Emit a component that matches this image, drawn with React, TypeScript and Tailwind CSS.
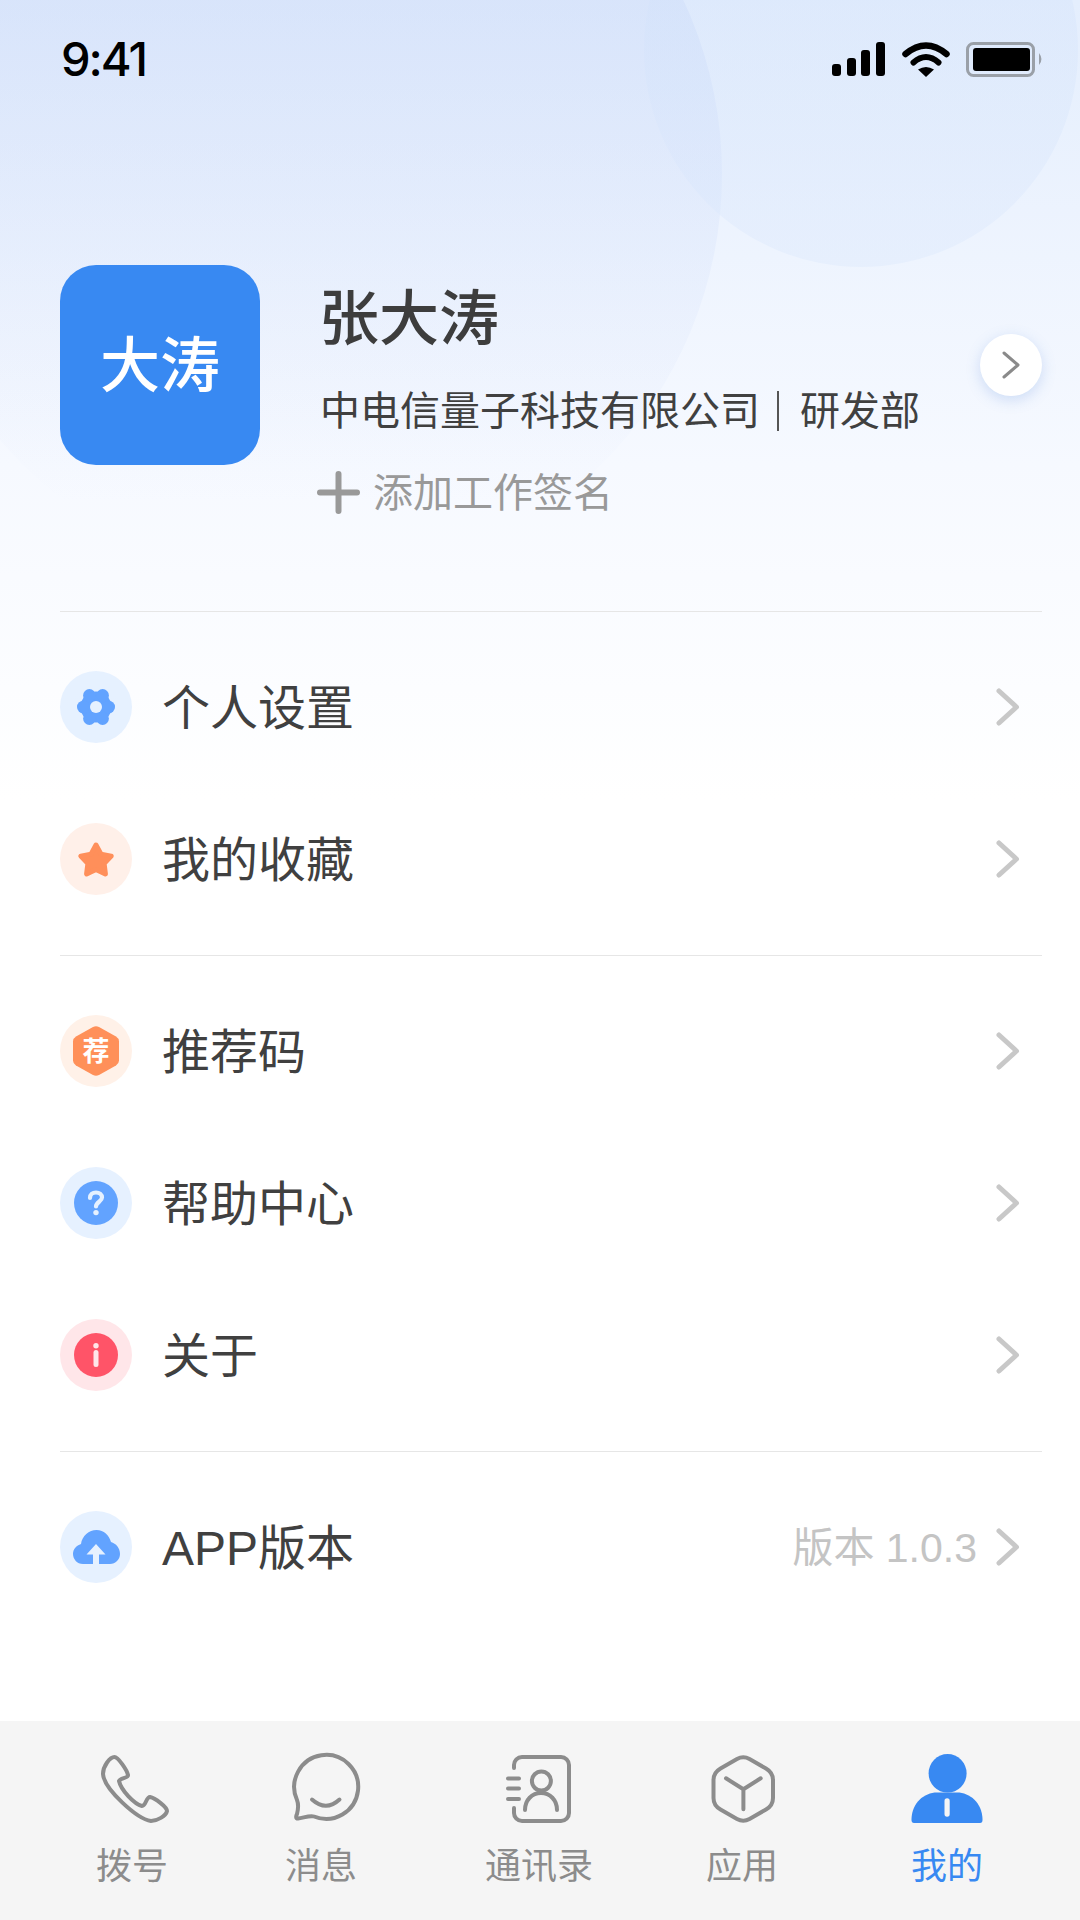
// 我的 (profile) tab of a softphone app, with a pale blue wash behind the header.
import type { ReactNode } from 'react'

const FONT = 'font-["Liberation_Sans","Noto_Sans_CJK_SC",sans-serif]'

function Chevron() {
  return (
    <svg width="24" height="38" viewBox="0 0 24 38" fill="none" className="shrink-0">
      <path d="M3 3 L20.5 19 L3 35" stroke="#c8c8c8" strokeWidth="5" strokeLinecap="round" strokeLinejoin="round" />
    </svg>
  )
}

function RowIcon({ bg, children }: { bg: string; children: ReactNode }) {
  return (
    <svg width="72" height="72" viewBox="0 0 72 72" className="shrink-0">
      <circle cx="36" cy="36" r="36" fill={bg} />
      {children}
    </svg>
  )
}

const gear = (
  <RowIcon bg="#e6f1ff">
    <g fill="#62a3ff">
      <circle cx="36" cy="36" r="15.5" />
      <circle cx="48.7" cy="36" r="6.3" />
      <circle cx="23.3" cy="36" r="6.3" />
      <circle cx="42.6" cy="24.4" r="6.3" />
      <circle cx="29.4" cy="24.4" r="6.3" />
      <circle cx="42.6" cy="47.6" r="6.3" />
      <circle cx="29.4" cy="47.6" r="6.3" />
    </g>
    <circle cx="36" cy="36" r="6" fill="#e6f1ff" />
  </RowIcon>
)

const star = (
  <RowIcon bg="#fff0e9">
    <path
      d="M36 22 L41 31.1 L51.2 33.1 L44.1 40.6 L45.4 50.9 L36 46.5 L26.6 50.9 L27.9 40.6 L20.8 33.1 L31 31.1 Z"
      fill="#ff8f5a"
      stroke="#ff8f5a"
      strokeWidth="5"
      strokeLinejoin="round"
    />
  </RowIcon>
)

const referral = (
  <RowIcon bg="#fff1e8">
    <path
      d="M33 12 Q36 10.4 39 12 L56 21.5 Q59 23.3 59 26.5 V45.5 Q59 48.7 56 50.5 L39 60 Q36 61.6 33 60 L16 50.5 Q13 48.7 13 45.5 V26.5 Q13 23.3 16 21.5 Z"
      fill="#ff9059"
    />
    <text x="36" y="46" textAnchor="middle" fontSize="27" fontWeight="700" fill="#fff" fontFamily="'Noto Sans CJK SC', sans-serif">
      荐
    </text>
  </RowIcon>
)

const help = (
  <RowIcon bg="#e6f1ff">
    <circle cx="36" cy="36" r="22" fill="#62a3ff" />
    <path
      d="M30 31 C30 27.5 32.6 25.5 36 25.5 C39.4 25.5 42 27.6 42 30.6 C42 34.6 36 35 36 39.5"
      fill="none"
      stroke="#e6f1ff"
      strokeWidth="4.2"
      strokeLinecap="round"
    />
    <circle cx="36" cy="45.6" r="2.7" fill="#e6f1ff" />
  </RowIcon>
)

const about = (
  <RowIcon bg="#ffe6e9">
    <circle cx="36" cy="36" r="22" fill="#ff5468" />
    <circle cx="36" cy="26.8" r="2.7" fill="#ffe6e9" />
    <path d="M36 33.5 V45.5" stroke="#ffe6e9" strokeWidth="5" strokeLinecap="round" />
  </RowIcon>
)

const upload = (
  <RowIcon bg="#e6f1ff">
    <path
      d="M23 53 C17 53 13 48 13 43 C13 38 16.5 34.5 21 33 C22 25 29 19 36.5 19 C44 19 49 24 51 31 C56 32.5 60 37 60 43 C60 48.5 55.5 53 50 53 Z"
      fill="#62a3ff"
    />
    <path d="M36 33 L45.5 43.5 H39 V53 H33 V43.5 H26.5 Z" fill="#e6f1ff" />
  </RowIcon>
)

function Row({ icon, label, extra }: { icon: ReactNode; label: string; extra?: string }) {
  return (
    <div className="flex h-[152px] items-center pr-[22px]">
      {icon}
      <span className="ml-[30px] mt-[3px] text-[48px] leading-none text-[#404040]">{label}</span>
      {extra && <span className="ml-auto mr-[19px] mt-[2px] text-[41px] leading-none text-[#c4c4c4]">{extra}</span>}
      <div className={extra ? '' : 'ml-auto'}>
        <Chevron />
      </div>
    </div>
  )
}

const TAB_GREY = '#8c8c8c'

const phoneIcon = (
  <path
    d="M18.5 4 C22 4 31 17 32 22 C32.5 25 24 25 23 28 C25 37 38 51 46 53 C50 53 50 44 54 44 C59 45 71 54 71 58 C70 63 61 68 55 68 C41 66 8 36 7 21 C7 13 14 4 18.5 4 Z"
    fill="none"
    stroke={TAB_GREY}
    strokeWidth="4"
    strokeLinejoin="round"
  />
)

const chatIcon = (
  <g fill="none" stroke={TAB_GREY} strokeWidth="4" strokeLinecap="round" strokeLinejoin="round" transform="translate(1 1)">
    <path d="M11 46 A32 32 0 1 1 28 62.5 C24 61 17 64 12 64.5 C9.5 64.5 10 62 11 60 C12 56 13 51 11 46 Z" />
    <path d="M26 45.5 Q40 58 53.5 45.5" />
  </g>
)

const contactsIcon = (
  <g fill="none" stroke={TAB_GREY} strokeWidth="4" strokeLinecap="round">
    <path d="M11 15 V12 A8 8 0 0 1 19 4 H58 A8 8 0 0 1 66 12 V60 A8 8 0 0 1 58 68 H19 A8 8 0 0 1 11 60 V55" />
    <path d="M5 25.5 H16 M5 35.5 H16 M5 46 H16" />
    <circle cx="38.4" cy="28" r="9.5" />
    <path d="M22 57 C22 47 29 40 38 40 C47 40 54 47 54 57" />
  </g>
)

const cubeIcon = (
  <g fill="none" stroke={TAB_GREY} strokeWidth="4" strokeLinecap="round" strokeLinejoin="round">
    <path d="M31 6 Q37.3 2.5 43.5 6 L60 15.5 Q67 19.5 67 27 V45 Q67 52.5 60 56.5 L43.5 66 Q37.3 69.5 31 66 L14.5 56.5 Q7.5 52.5 7.5 45 V27 Q7.5 19.5 14.5 15.5 Z" />
    <path d="M20 25.3 L37.4 36.3 L54.7 25.3 M37.4 36.3 V56.3" />
  </g>
)

const meIcon = (
  <g>
    <ellipse cx="36.6" cy="20.3" rx="19" ry="19.3" fill="#3889f2" />
    <path d="M0.5 66 C1 50 13 39.5 26 39.5 H46 C59 39.5 71 50 71.5 66 V67 Q71.5 70 69 70 H3 Q0.5 70 0.5 67 Z" fill="#3889f2" />
    <rect x="33.5" y="45.3" width="5.2" height="18.4" rx="2.6" fill="#f5f5f5" />
  </g>
)

function Tab({ icon, label, className, active }: { icon: ReactNode; label: string; className: string; active?: boolean }) {
  return (
    <div className={`flex flex-col items-center ${className}`}>
      <svg width="72" height="72" viewBox="0 0 72 72" className="shrink-0 overflow-visible">
        {icon}
      </svg>
      <span className={`mt-[24px] text-[36px] leading-none ${active ? 'text-[#3889f2]' : 'text-[#8c8c8c]'}`}>{label}</span>
    </div>
  )
}

export default function App() {
  return (
    <div className={`relative flex h-[1920px] w-[1080px] flex-col overflow-hidden bg-white ${FONT}`}>
      {/* pale wash and the two soft circles behind the header */}
      <div className="absolute inset-x-0 top-0 h-[800px] bg-linear-to-b from-[#e4eefd] via-[#f6f9ff] via-58% to-white" />
      <div className="absolute left-[-98px] top-[-236px] h-[820px] w-[820px] rounded-full bg-linear-to-b from-[#c3d3f7]/35 from-30% to-white/0 to-90%" />
      <div className="absolute left-[644px] top-[-167px] h-[434px] w-[434px] rounded-full bg-linear-to-b from-[#c9dbf9]/30 to-[#dbe8fc]/40" />

      {/* status bar */}
      <div className="relative flex h-[118px] shrink-0 items-center justify-between pl-[61px] pr-[36px]">
        <span className="mt-[-1px] font-['Inter',sans-serif] text-[47px] font-medium leading-none tracking-[-2px] text-black">9:41</span>
        <svg width="212" height="35" viewBox="0 0 212 35">
          <rect x="0" y="22" width="9" height="12" rx="3" fill="#000" />
          <rect x="15" y="16" width="9" height="18" rx="3" fill="#000" />
          <rect x="29" y="8" width="9" height="26" rx="3" fill="#000" />
          <rect x="44" y="0" width="9" height="34" rx="3" fill="#000" />
          <path d="M73.5 12 Q94 -5 114.5 12" fill="none" stroke="#000" strokeWidth="6.5" strokeLinecap="round" />
          <path d="M81.5 20.5 Q94 9.5 106.5 20.5" fill="none" stroke="#000" strokeWidth="6" strokeLinecap="round" />
          <path d="M86 27.5 Q94 22.5 102 27.5 L94 35 Z" fill="#000" />
          <rect x="135.5" y="1.5" width="66" height="32" rx="6" fill="none" stroke="#9aa0a8" strokeWidth="3" />
          <rect x="141" y="6" width="57" height="23" rx="3" fill="#000" />
          <path d="M207 11 Q212 17.5 207 23 Z" fill="#9aa0a8" />
        </svg>
      </div>

      {/* profile header */}
      <div className="relative flex h-[493px] shrink-0 items-start pl-[60px] pr-[38px] pt-[147px]">
        <div className="flex h-[200px] w-[200px] shrink-0 items-center justify-center rounded-[36px] bg-[#3889f2] pt-[3px] text-[60px] font-medium leading-none text-white">
          大涛
        </div>
        <div className="ml-[60px] flex flex-col pt-[15px]">
          <span className="ml-[-1px] text-[60px] font-medium leading-[80px] text-[#3d3d3d]">张大涛</span>
          <div className="mt-[25px] flex h-[52px] items-center text-[40px] leading-[52px] text-[#404040]">
            <span>中电信量子科技有限公司</span>
            <div className="ml-[17px] mr-[21px] h-[40px] w-[2px] bg-[#555]" />
            <span>研发部</span>
          </div>
          <div className="mt-[34px] flex items-center">
            <svg width="43" height="43" viewBox="0 0 43 43" className="ml-[-3px] mr-[13px]">
              <path d="M21.5 3 V40 M3 21.5 H40" stroke="#999" strokeWidth="6" strokeLinecap="round" />
            </svg>
            <span className="text-[40px] leading-none text-[#999]">添加工作签名</span>
          </div>
        </div>
        <div className="ml-auto mt-[69px] flex h-[62px] w-[62px] shrink-0 items-center justify-center rounded-full bg-white shadow-[0_4px_14px_rgba(90,140,220,0.25)]">
          <svg width="18" height="28" viewBox="0 0 18 28" fill="none">
            <path d="M2 2 L16 14 L2 26" stroke="#8a8a8a" strokeWidth="3" strokeLinecap="round" strokeLinejoin="round" />
          </svg>
        </div>
      </div>

      {/* menu */}
      <div className="relative flex flex-col pl-[60px] pr-[38px]">
        <div className="border-t border-[#e6e6e6] pb-[20px] pt-[19px]">
          <Row icon={gear} label="个人设置" />
          <Row icon={star} label="我的收藏" />
        </div>
        <div className="border-t border-[#e6e6e6] pb-[20px] pt-[19px]">
          <Row icon={referral} label="推荐码" />
          <Row icon={help} label="帮助中心" />
          <Row icon={about} label="关于" />
        </div>
        <div className="border-t border-[#e6e6e6] pt-[19px]">
          <Row icon={upload} label="APP版本" extra="版本 1.0.3" />
        </div>
      </div>

      {/* bottom tabs */}
      <div className="absolute inset-x-0 bottom-0 flex h-[199px] items-start bg-[#f5f5f5] pl-[96px] pt-[32px]">
        <Tab icon={phoneIcon} label="拨号" className="w-[72px]" />
        <Tab icon={chatIcon} label="消息" className="ml-[117px] w-[72px]" />
        <Tab icon={contactsIcon} label="通讯录" className="ml-[128px] w-[108px]" />
        <Tab icon={cubeIcon} label="应用" className="ml-[113px] w-[72px]" />
        <Tab icon={meIcon} label="我的" className="ml-[133px] w-[72px]" active />
      </div>
    </div>
  )
}
